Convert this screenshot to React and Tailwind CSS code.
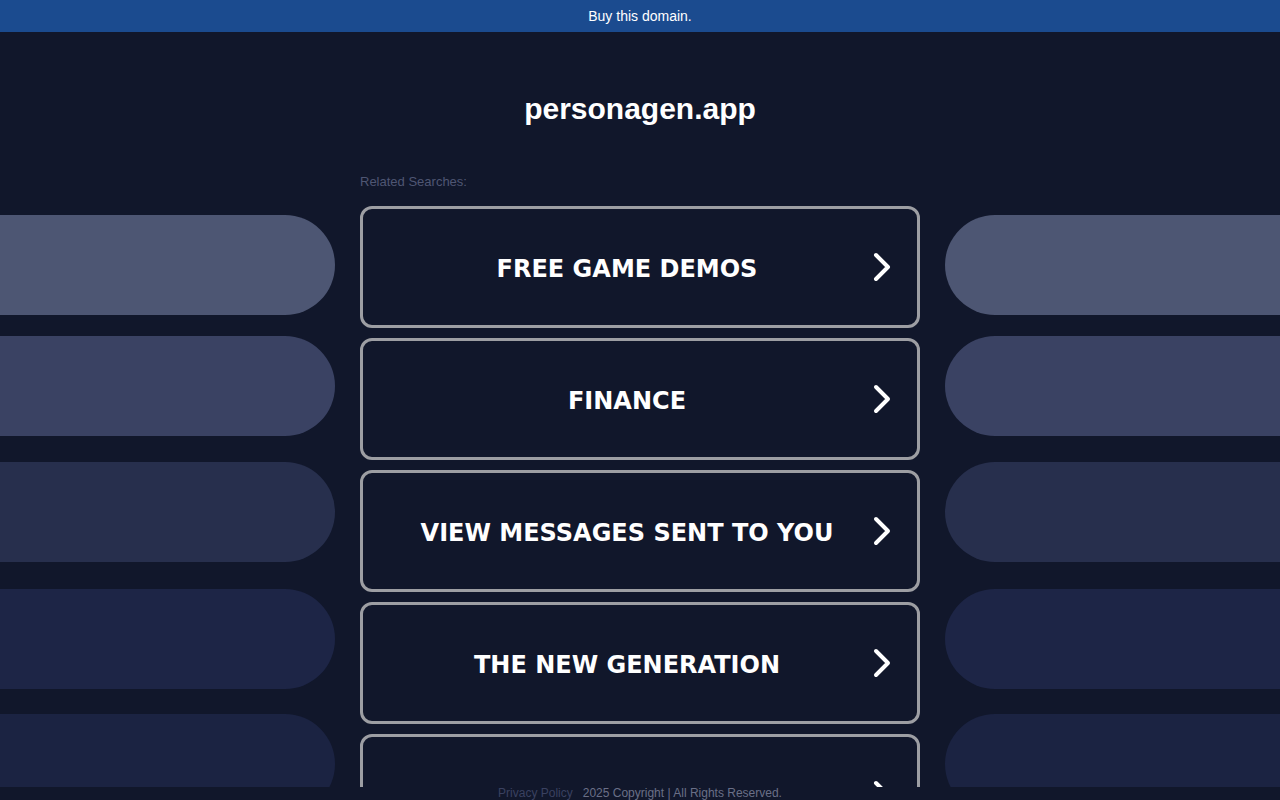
import React from 'react';

const searches = [
  'FREE GAME DEMOS',
  'FINANCE',
  'VIEW MESSAGES SENT TO YOU',
  'THE NEW GENERATION',
];

// side decorations: colour + top margin, read from the picture
const pills = [
  { color: 'bg-[#4d5673]', mt: 'mt-[183px]' },
  { color: 'bg-[#3a4263]', mt: 'mt-[21px]' },
  { color: 'bg-[#272f4d]', mt: 'mt-[26px]' },
  { color: 'bg-[#1d2546]', mt: 'mt-[27px]' },
  { color: 'bg-[#1b2342]', mt: 'mt-[25px]' },
];

const Chevron = () => (
  <svg width="18" height="30" viewBox="0 0 18 30" fill="none" className="shrink-0">
    <path d="M3 3 L15 15 L3 27" stroke="#ffffff" strokeWidth="4" strokeLinecap="round" strokeLinejoin="round" />
  </svg>
);

const SidePills = ({ side }) => (
  <div className="w-[335px] shrink-0 flex flex-col">
    {pills.map((p, i) => (
      <div
        key={i}
        className={`${p.mt} h-[100px] ${p.color} ${side === 'left' ? 'rounded-r-full' : 'rounded-l-full'}`}
      />
    ))}
  </div>
);

const SearchCard = ({ label }) => (
  <a
    href="#"
    className="h-[122px] shrink-0 rounded-[12px] border-[3px] border-[#9d9ea3] flex items-center pl-[24px] pr-[26px]"
  >
    <span className="flex-1 mr-[6px] mt-[4px] text-center text-white font-bold text-[24px] font-['DejaVu_Sans',Verdana,sans-serif]">
      {label}
    </span>
    <Chevron />
  </a>
);

export default function App() {
  return (
    <div className="h-[800px] overflow-hidden bg-[#11172b] font-['Liberation_Sans',Arial,sans-serif] relative">
      <div className="h-8 bg-[#1b4b8f] flex items-center justify-center text-white text-[14px]">
        Buy this domain.
      </div>

      <div className="flex justify-between">
        <SidePills side="left" />

        <div className="w-[560px] shrink-0 flex flex-col">
          <h1 className="mt-[59px] h-[36px] text-center text-white text-[30px] font-bold leading-[36px]">
            personagen.app
          </h1>
          <div className="mt-[47px] text-[13px] text-[#4f5673] leading-[16px]">Related Searches:</div>
          <div className="mt-[16px] flex flex-col gap-[10px]">
            {searches.map((s) => (
              <SearchCard key={s} label={s} />
            ))}
            {/* last card runs under the footer, only its chevron peeks out */}
            <SearchCard label="" />
          </div>
        </div>

        <SidePills side="right" />
      </div>

      <div className="absolute left-0 right-0 bottom-0 h-[13px] bg-[#11172b] flex justify-center items-start text-[12px] leading-[13px] gap-[10px]">
        <span className="text-[#3a4160]">Privacy Policy</span>
        <span className="text-[#6a6f87]">2025 Copyright | All Rights Reserved.</span>
      </div>
    </div>
  );
}
